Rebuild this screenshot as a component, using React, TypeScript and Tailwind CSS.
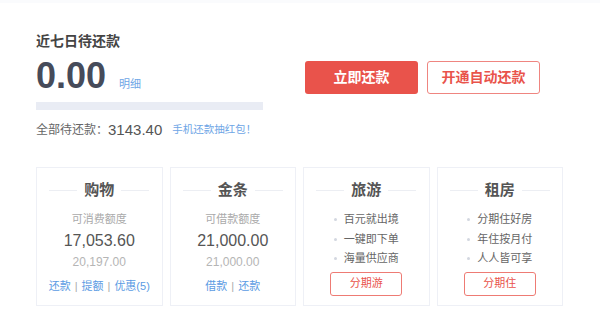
import React from 'react';

const font = { fontFamily: '"Liberation Sans", "Noto Sans CJK SC", sans-serif' };

function CardTitle({ title }: { title: string }) {
  return (
    <div className="flex items-center justify-center gap-[7px] h-[24px]">
      <span className="h-px w-[28px] bg-[#eceef3]" />
      <span className="text-[15px] font-bold text-[#555]">{title}</span>
      <span className="h-px w-[28px] bg-[#eceef3]" />
    </div>
  );
}

function CreditCard({
  title,
  label,
  amount,
  total,
  links,
}: {
  title: string;
  label: string;
  amount: string;
  total: string;
  links: string[];
}) {
  return (
    <div className="border border-[#eef0f6] h-[139px] pt-[10px] flex flex-col items-center whitespace-nowrap">
      <CardTitle title={title} />
      <div className="mt-[8px] text-[11px] leading-[18px] text-[#aaa]">{label}</div>
      <div className="mt-[2px] text-[16px] leading-[22px] text-[#555]">{amount}</div>
      <div className="mt-[0px] text-[12px] leading-[20px] text-[#b5b5b5]">{total}</div>
      <div className="mt-[5px] flex items-center text-[11px] leading-[18px] text-[#5b9be3]">
        {links.map((l, i) => (
          <React.Fragment key={l}>
            {i > 0 && <span className="mx-[4px] text-[#aaa]">|</span>}
            <span>{l}</span>
          </React.Fragment>
        ))}
      </div>
    </div>
  );
}

function PromoCard({ title, items, action }: { title: string; items: string[]; action: string }) {
  return (
    <div className="border border-[#eef0f6] h-[139px] pt-[10px] flex flex-col items-center whitespace-nowrap">
      <CardTitle title={title} />
      <ul className="mt-[8px] flex flex-col">
        {items.map((it) => (
          <li key={it} className="flex items-center gap-[7px] text-[11px] leading-[19.5px] text-[#666]">
            <span className="w-[3px] h-[3px] rounded-full bg-[#d3d7e0]" />
            {it}
          </li>
        ))}
      </ul>
      <button className="mt-[3px] w-[72px] h-[24px] rounded-[3px] border border-[#ee7b74] text-[11px] text-[#e9534b]">
        {action}
      </button>
    </div>
  );
}

export default function App() {
  return (
    <div className="w-[600px] h-[321px] bg-white" style={font}>
      <div className="h-[3px] bg-[#fafbfd]" />
      <div className="px-[36px] pt-[28px]">
        <div className="flex">
          <div className="w-[227px] whitespace-nowrap">
            <div className="text-[14px] leading-[20px] font-bold text-[#444]">近七日待还款</div>
            <div className="flex items-end mt-[7px] h-[36px]">
              <span className="text-[36px] leading-[36px] font-bold text-[#464b5a]">0.00</span>
              <span className="ml-[13px] mb-[2px] text-[11px] text-[#6ea6e6]">明细</span>
            </div>
            <div className="mt-[8px] h-[8px] bg-[#e9ecf4]" />
            <div className="mt-[10px] h-[20px] flex items-center text-[12px] text-[#666]">
              <span>全部待还款：</span>
              <span className="text-[15px] text-[#555]">3143.40</span>
              <span className="ml-[10px] text-[10.5px] text-[#6ea6e6]">手机还款抽红包！</span>
            </div>
          </div>
          <div className="ml-[42px] mt-[30px] flex gap-[9px]">
            <button className="w-[113px] h-[33px] rounded-[3px] bg-[#e9534b] text-white text-[14px] font-bold">
              立即还款
            </button>
            <button className="w-[113px] h-[33px] rounded-[3px] border border-[#ef8580] text-[#e9534b] text-[14px] font-bold">
              开通自动还款
            </button>
          </div>
        </div>
        <div className="mt-[27px] w-[527px] grid grid-cols-4 gap-[7px]">
          <CreditCard
            title="购物"
            label="可消费额度"
            amount="17,053.60"
            total="20,197.00"
            links={['还款', '提额', '优惠(5)']}
          />
          <CreditCard
            title="金条"
            label="可借款额度"
            amount="21,000.00"
            total="21,000.00"
            links={['借款', '还款']}
          />
          <PromoCard title="旅游" items={['百元就出境', '一键即下单', '海量供应商']} action="分期游" />
          <PromoCard title="租房" items={['分期住好房', '年住按月付', '人人皆可享']} action="分期住" />
        </div>
      </div>
    </div>
  );
}
